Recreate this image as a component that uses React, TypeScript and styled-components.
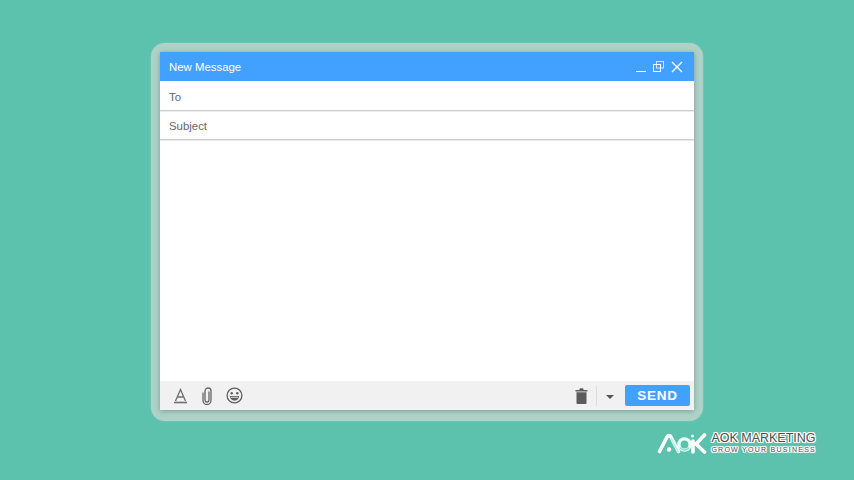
import React from "react";
import styled, { createGlobalStyle } from "styled-components";

const Global = createGlobalStyle`
  html, body { margin: 0; padding: 0; width: 854px; height: 480px; overflow: hidden; background: #5cc2ad; }
  #root { width: 854px; height: 480px; }
`;

const Stage = styled.main`
  width: 854px;
  height: 480px;
  background: #5cc2ad;
  display: flex;
  flex-direction: column;
  align-items: flex-start;
  padding: 43px 0 0 151px;
  box-sizing: border-box;
  font-family: "Liberation Sans", Arial, sans-serif;
`;

const Frame = styled.div`
  width: 552px;
  height: 378px;
  box-sizing: border-box;
  padding: 9px;
  border-radius: 14px;
  background: #aed2c8;
  box-shadow: 0 0 2px rgba(174, 210, 200, 0.7);
`;

const Composer = styled.section`
  width: 534px;
  height: 358px;
  display: flex;
  flex-direction: column;
  background: #fff;
  box-shadow: 0 1px 5px rgba(80, 125, 113, 0.6);
`;

const Header = styled.header`
  height: 29px;
  flex: none;
  background: #42a1ff;
  color: #fff;
  font-size: 11.4px;
  display: flex;
  align-items: center;
  padding: 0 11px 0 9px;
`;

const Title = styled.span`
  flex: 1;
`;

const WindowControls = styled.div`
  display: flex;
  align-items: center;
  gap: 7px;
`;

const Field = styled.div<{ $height: number }>`
  height: ${(p) => p.$height}px;
  flex: none;
  box-sizing: border-box;
  border-bottom: 1px solid #cdcdcd;
  box-shadow: 0 1px 0 #ececec;
  color: #666;
  font-size: 11.4px;
  display: flex;
  align-items: center;
  padding: 2px 0 0 9px;
`;

const Body = styled.div`
  flex: 1;
`;

const Footer = styled.footer`
  height: 29px;
  flex: none;
  background: #f1f1f1;
  display: flex;
  align-items: center;
  padding: 0 4px 0 13px;
`;

const Tools = styled.div`
  display: flex;
  align-items: center;
  gap: 12px;
  flex: 1;
`;

const Actions = styled.div`
  display: flex;
  align-items: center;
`;

const Divider = styled.span`
  width: 1px;
  height: 20px;
  background: #dcdcdc;
  margin: 0 9px 0 8px;
`;

const Caret = styled.span`
  width: 0;
  height: 0;
  border-left: 4px solid transparent;
  border-right: 4px solid transparent;
  border-top: 4px solid #555;
  margin: 2px 11px 0 0;
`;

const SendButton = styled.button`
  width: 65px;
  height: 21px;
  border: 0;
  border-radius: 2px;
  padding: 0;
  background: #42a1ff;
  color: #fff;
  font: 700 13.5px "Liberation Sans", Arial, sans-serif;
  letter-spacing: 0.7px;
`;

const Brand = styled.div`
  align-self: flex-end;
  display: flex;
  align-items: center;
  gap: 4px;
  margin: 10px 38px 0 0;
`;

const Wordmark = styled.div`
  display: flex;
  flex-direction: column;
  color: #46514f;
  text-shadow: -1px 0 0 #fff, 1px 0 0 #fff, 0 -1px 0 #fff, 0 1px 0 #fff, 1px 1px 0 #fff, -1px -1px 0 #fff, 1px -1px 0 #fff, -1px 1px 0 #fff;
`;

const BrandName = styled.span`
  font-size: 12.5px;
  line-height: 13px;
  white-space: nowrap;
`;

const BrandTag = styled.span`
  font-size: 7px;
  line-height: 9px;
  letter-spacing: 1.26px;
  white-space: nowrap;
`;

const Minimize = () => (
  <svg width="10" height="12" viewBox="0 0 10 12"><path d="M0 10.500h10" stroke="#fff" strokeWidth="1" /></svg>
);
const Restore = () => (
  <svg width="11" height="11" viewBox="0 0 11 11" fill="none" stroke="#fff" strokeWidth="1">
    <rect x="3.500" y=".5" width="7" height="6.500" strokeOpacity=".75" />
    <rect x=".5" y="3.500" width="7" height="7" />
  </svg>
);
const Close = () => (
  <svg width="12" height="12" viewBox="0 0 12 12"><path d="M1 1l10 10M11 1L1 11" stroke="#fff" strokeWidth="1.400" /></svg>
);
const TextFormat = () => (
  <svg width="15" height="16" viewBox="0 0 15 16" fill="none" stroke="#6e6e6e">
    <path d="M2.500 13L7.500 1.500l5 11.500M4.800 9h5.400" strokeWidth="1.300" />
    <path d="M1 14.500h13" strokeWidth="1.600" />
  </svg>
);
const Clip = () => (
  <svg width="14" height="18" viewBox="0 0 14 18" fill="none" stroke="#666" strokeWidth="1.300" strokeLinecap="round">
    <path d="M9 5v8a2 2 0 0 1-4 0V4a3 3 0 0 1 6 0v9.500a4 4 0 0 1-8 0V6" />
  </svg>
);
const Smile = () => (
  <svg width="17" height="17" viewBox="0 0 17 17">
    <circle cx="8.500" cy="8.500" r="7.400" fill="none" stroke="#5f5f5f" strokeWidth="1.300" />
    <circle cx="5.700" cy="6.300" r="1.200" fill="#5f5f5f" />
    <circle cx="11.300" cy="6.300" r="1.200" fill="#5f5f5f" />
    <path d="M3.800 9h9.400a4.700 4.700 0 0 1-9.400 0z" fill="#5f5f5f" />
    <path d="M4.800 10.300h7.400" stroke="#ddd" strokeWidth="1" />
  </svg>
);
const Trash = () => (
  <svg width="13" height="17" viewBox="0 0 13 17">
    <path d="M.5 3h12v1.500H.5zM4.300 3l.6-1.800h3.200L8.700 3z" fill="#5c5c5c" />
    <path d="M1.500 5.300h10v10.900a.8.8 0 0 1-.8.8H2.300a.8.8 0 0 1-.8-.8z" fill="#5c5c5c" />
  </svg>
);
const Mark = () => (
  <svg width="50" height="24" viewBox="0 0 50 24" fill="none" strokeLinejoin="round" strokeLinecap="round">
    <path d="M2.500 20.500L10 6c1-1.800 3-1.800 4 0l7.500 14.500" stroke="#fff" strokeWidth="3.600" />
    <path d="M14.500 8l6.500 12.500" stroke="#b4f3dc" strokeWidth="1.600" />
    <circle cx="12" cy="18.500" r="2.200" fill="#fff" />
    <circle cx="27.500" cy="13.500" r="5.600" stroke="#eafff8" strokeWidth="3.400" />
    <path d="M23.300 17a5.600 5.600 0 0 0 8.400 0" stroke="#7fe8c8" strokeWidth="1.500" />
    <circle cx="35.500" cy="5" r="1.500" fill="#e6fff6" />
    <path d="M36 10v11M47.500 4L39 13l8.500 8" stroke="#fff" strokeWidth="3.600" />
  </svg>
);

export default function App() {
  return (
    <>
      <Global />
      <Stage>
        <Frame>
          <Composer>
            <Header>
              <Title>New Message</Title>
              <WindowControls>
                <Minimize />
                <Restore />
                <Close />
              </WindowControls>
            </Header>
            <Field $height={30}>To</Field>
            <Field $height={29}>Subject</Field>
            <Body />
            <Footer>
              <Tools>
                <TextFormat />
                <Clip />
                <Smile />
              </Tools>
              <Actions>
                <Trash />
                <Divider />
                <Caret />
                <SendButton>SEND</SendButton>
              </Actions>
            </Footer>
          </Composer>
        </Frame>
        <Brand>
          <Mark />
          <Wordmark>
            <BrandName>AOK MARKETING</BrandName>
            <BrandTag>GROW YOUR BUSINESS</BrandTag>
          </Wordmark>
        </Brand>
      </Stage>
    </>
  );
}
